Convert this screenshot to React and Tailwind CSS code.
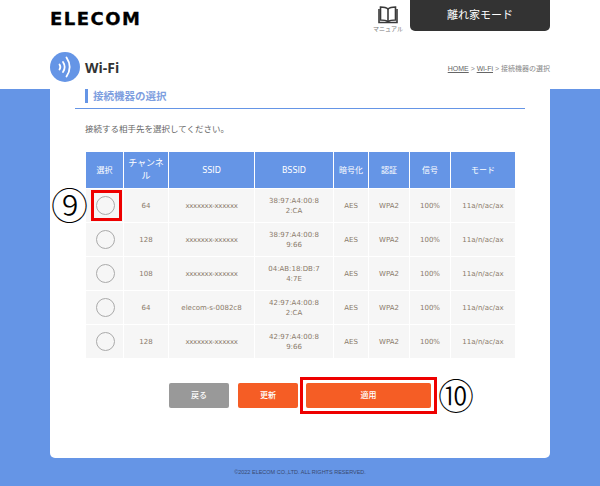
const rows = [
  ["64", "xxxxxxx-xxxxxx", "38:97:A4:00:8\n2:CA", "mark"],
  ["128", "xxxxxxx-xxxxxx", "38:97:A4:00:8\n9:66"],
  ["108", "xxxxxxx-xxxxxx", "04:AB:18:DB:7\n4:7E"],
  ["64", "elecom-s-0082c8", "42:97:A4:00:8\n2:CA"],
  ["128", "xxxxxxx-xxxxxx", "42:97:A4:00:8\n9:66"],
];
const heads = ["選択", "チャンネル", "SSID", "BSSID", "暗号化", "認証", "信号", "モード"];

function Cell({ children, className = "" }) {
  return <div className={"flex items-center justify-center text-center whitespace-pre-line bg-[#f6f6f6] text-[#8a7a6a] text-[7px] leading-[10px] " + className}>{children}</div>;
}

export default function App() {
  return (
    <div className="relative w-[600px] h-[486px] overflow-hidden flex flex-col bg-[#6595e6] font-['DejaVu_Sans','Noto_Sans_CJK_JP',sans-serif]">
      <header className="h-[89px] shrink-0 bg-white px-[50px] flex flex-col">
        <div className="h-[52px] flex items-start justify-between">
          <div className="pt-[9px] text-[18px] leading-[20px] font-bold tracking-[1.5px] text-black [-webkit-text-stroke:0.3px_black] font-['DejaVu_Sans',sans-serif]">ELECOM</div>
          <div className="flex items-start">
            <div className="w-[32px] mr-[6px] pt-[6px] flex flex-col items-center">
              <svg width="20" height="18" viewBox="0 0 20 18" fill="none" stroke="#3a3a3a" strokeWidth="1.6">
                <path d="M10 3C8 1.200 5.500 1 2.500 1v13c3 0 5.500.2 7.500 1.600C12 14.200 14.500 14 17.500 14V1c-3 0-5.500.2-7.500 2z" />
                <path d="M10 3v12.500" />
                <path d="M1 3v13.500h18V3" />
              </svg>
              <span className="mt-[1px] text-[6px] leading-[7px] text-[#777] whitespace-nowrap">マニュアル</span>
            </div>
            <div className="w-[140px] h-[31px] pt-[1px] bg-[#333333] rounded-b-[5px] flex items-center justify-center text-white text-[11px]">離れ家モード</div>
          </div>
        </div>
        <div className="flex items-center justify-between h-[30px]">
          <div className="flex items-center gap-[5px]">
            <div className="w-[30px] h-[30px] rounded-full bg-[#6595e6] flex items-center justify-center">
              <svg width="14" height="24" viewBox="0 0 14 24" fill="none" stroke="white" strokeLinecap="round" strokeWidth="1.8">
                <path d="M1.500 9.500c1 1.500 1 3.500 0 5" />
                <path d="M5 7c2 3 2 7 0 10" />
                <path d="M8.500 2.500c4 6 4 13 0 19" />
              </svg>
            </div>
            <span className="text-[14px] font-bold text-[#333] font-['Open_Sans',sans-serif]">Wi-Fi</span>
          </div>
          <div className="pt-[4px] text-[7px] text-[#888] whitespace-nowrap font-['Liberation_Sans','Noto_Sans_CJK_JP',sans-serif]">
            <span className="underline text-[#666]">HOME</span> &gt; <span className="underline text-[#666]">Wi-Fi</span> &gt; 接続機器の選択
          </div>
        </div>
      </header>

      <main className="mx-[50px] h-[369px] shrink-0 bg-white rounded-b-[5px] flex flex-col">
        <div className="mx-[25px] h-[20px] border-b border-[#6595e6] pl-[10px]">
          <div className="h-[14px] border-l-[3px] border-[#6595e6] pl-[5px] text-[10.500px] leading-[14px] font-bold text-[#7f9fe0]">接続機器の選択</div>
        </div>
        <p className="ml-[35px] mt-[14px] text-[8.500px] leading-[12px] text-[#666]">接続する相手先を選択してください。</p>
        <div className="ml-[36px] mt-[17px] grid grid-cols-[37px_44px_85px_78px_34px_40px_40px_64px] grid-rows-[36px_33px_33px_33px_33px_33px] gap-px w-[429px]">
          {heads.map((h) => (
            <div key={h} className="bg-[#6595e6] text-white text-[8px] leading-[13px] font-normal flex items-center justify-center text-center px-[4px]">
              {h === "チャンネル" ? <span className="w-[36px] text-[9px]">{h}</span> : h}
            </div>
          ))}
          {rows.map((r, i) => (
            <div key={i} className="contents">
              <Cell>
                <div className="relative left-[1px]">
                  <div className="w-[19px] h-[19px] rounded-full border border-[#aaa] bg-[#f6f6f6]" />
                  {r[3] && (
                    <>
                      <div className="absolute left-[-5px] top-[-6px] w-[31px] h-[31px] border-[3px] border-[#ee0000]" />
                      <div className="absolute left-[-45px] top-[-12px] text-[37px] leading-[40px] font-light text-black font-['Noto_Sans_CJK_JP',sans-serif]">⑨</div>
                    </>
                  )}
                </div>
              </Cell>
              <Cell>{r[0]}</Cell>
              <Cell className={i === 3 ? "text-[#6a7a90]" : "tracking-[-0.3px]"}>{r[1]}</Cell>
              <Cell>{r[2]}</Cell>
              <Cell>AES</Cell>
              <Cell>WPA2</Cell>
              <Cell>100%</Cell>
              <Cell>11a/n/ac/ax</Cell>
            </div>
          ))}
        </div>
        <div className="ml-[119px] mt-[25px] flex items-start gap-[9px] text-white text-[8px] font-medium">
          <button className="w-[60px] h-[25px] rounded-[2px] bg-[#999999]">戻る</button>
          <button className="w-[60px] h-[25px] rounded-[2px] bg-[#f55d25]">更新</button>
          <div className="relative ml-[-1px]">
            <div className="w-[125px] h-[25px] rounded-[2px] bg-[#f55d25] flex items-center justify-center">適用</div>
            <div className="absolute left-[-6px] top-[-6px] w-[137px] h-[37px] border-[3px] border-[#ee0000]" />
            <div className="absolute left-[132px] top-[-9px] text-[36px] leading-[40px] font-light text-black font-['Noto_Sans_CJK_JP',sans-serif]">⑩</div>
          </div>
        </div>
      </main>

      <footer className="flex-1 flex items-center justify-center text-[5.500px] text-[#3a4a70] font-['Liberation_Sans',sans-serif]">©2022 ELECOM CO.,LTD. ALL RIGHTS RESERVED.</footer>
    </div>
  );
}
